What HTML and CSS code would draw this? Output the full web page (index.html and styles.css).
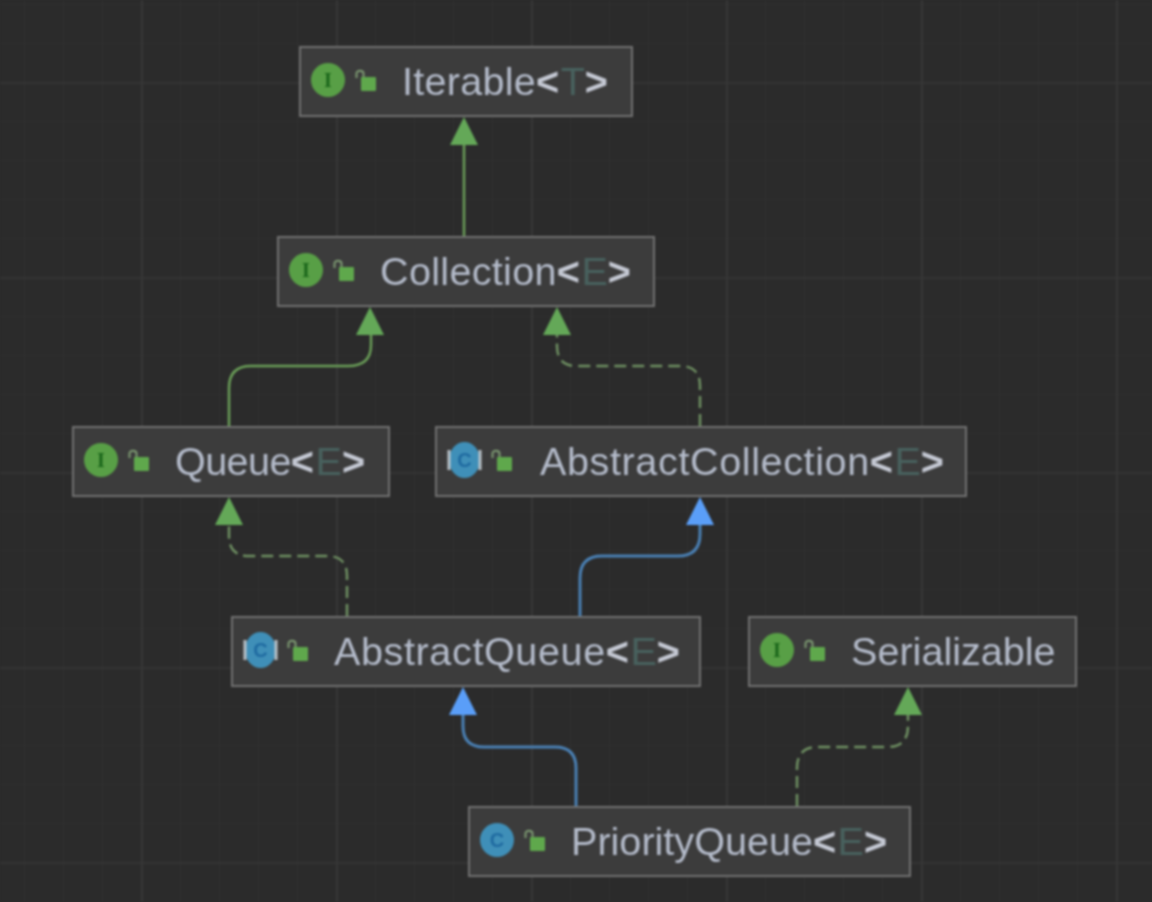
FILE: index.html
```html
<!DOCTYPE html>
<html lang="en">
<head>
<meta charset="utf-8">
<title>PriorityQueue diagram</title>
<link rel="stylesheet" href="styles.css">
</head>
<body>
<svg class="defs" width="0" height="0" aria-hidden="true">
  <defs>
    <symbol id="lock" viewBox="0 0 22 24">
      <path class="shackle" d="M1.500 9V4.500C1.500 2.800 3 1.800 5 1.800S8.500 2.800 8.500 4.500V8"/>
      <rect class="lock-body" x="6" y="8" width="15" height="14" rx="1"/>
    </symbol>
  </defs>
</svg>
<main class="canvas">
  <svg class="edges" width="1152" height="902" viewBox="0 0 1152 902" aria-hidden="true">
    <path class="edge green" d="M464 145V236"/>
    <path class="tip green-fill" d="M464 117L478 145H450Z"/>
    <path class="edge green" d="M229 426V388Q229 366 251 366H348Q371 366 371 345V335"/>
    <path class="tip green-fill" d="M370 307L384 335H356Z"/>
    <path class="edge green dashed" d="M700 426V386Q700 366 680 366H577Q557 366 557 346V335"/>
    <path class="tip green-fill" d="M557 307L571 335H543Z"/>
    <path class="edge green dashed" d="M347 616V576Q347 556 327 556H249Q229 556 229 536V525"/>
    <path class="tip green-fill" d="M229 497L243 525H215Z"/>
    <path class="edge blue" d="M580 616V578Q580 556 602 556H678Q700 556 700 534V525"/>
    <path class="tip blue-fill" d="M700 497L714 525H686Z"/>
    <path class="edge blue" d="M576 806V768Q576 747 555 747H484Q463 747 463 726V715"/>
    <path class="tip blue-fill" d="M463 687L477 715H449Z"/>
    <path class="edge green dashed" d="M797 806V768Q797 747 818 747H887Q908 747 908 726V715"/>
    <path class="tip green-fill" d="M908 687L922 715H894Z"/>
  </svg>

  <div class="node node-iterable">
    <svg class="badge" viewBox="0 0 44 36"><circle class="badge-i" cx="22" cy="18" r="17"/><text class="badge-letter letter-i" x="22" y="25">I</text></svg>
    <svg class="lock"><use href="#lock"/></svg>
    <span class="name">Iterable<b>&lt;</b><i>T</i><b>&gt;</b></span>
  </div>
  <div class="node node-collection">
    <svg class="badge" viewBox="0 0 44 36"><circle class="badge-i" cx="22" cy="18" r="17"/><text class="badge-letter letter-i" x="22" y="25">I</text></svg>
    <svg class="lock"><use href="#lock"/></svg>
    <span class="name">Collection<b>&lt;</b><i>E</i><b>&gt;</b></span>
  </div>
  <div class="node node-queue">
    <svg class="badge" viewBox="0 0 44 36"><circle class="badge-i" cx="22" cy="18" r="17"/><text class="badge-letter letter-i" x="22" y="25">I</text></svg>
    <svg class="lock"><use href="#lock"/></svg>
    <span class="name">Queue<b>&lt;</b><i>E</i><b>&gt;</b></span>
  </div>
  <div class="node node-abstract-collection">
    <svg class="badge" viewBox="0 0 44 36"><ellipse class="badge-c" cx="22.500" cy="18" rx="15.500" ry="18"/><path class="badge-bars" d="M7 8V28M38 8V28"/><text class="badge-letter letter-c" x="22.500" y="25">C</text></svg>
    <svg class="lock"><use href="#lock"/></svg>
    <span class="name">AbstractCollection<b>&lt;</b><i>E</i><b>&gt;</b></span>
  </div>
  <div class="node node-abstract-queue">
    <svg class="badge" viewBox="0 0 44 36"><ellipse class="badge-c" cx="22.500" cy="18" rx="15.500" ry="18"/><path class="badge-bars" d="M7 8V28M38 8V28"/><text class="badge-letter letter-c" x="22.500" y="25">C</text></svg>
    <svg class="lock"><use href="#lock"/></svg>
    <span class="name">AbstractQueue<b>&lt;</b><i>E</i><b>&gt;</b></span>
  </div>
  <div class="node node-serializable">
    <svg class="badge" viewBox="0 0 44 36"><circle class="badge-i" cx="22" cy="18" r="17"/><text class="badge-letter letter-i" x="22" y="25">I</text></svg>
    <svg class="lock"><use href="#lock"/></svg>
    <span class="name">Serializable</span>
  </div>
  <div class="node node-priority">
    <svg class="badge" viewBox="0 0 44 36"><circle class="badge-c" cx="22" cy="18" r="17"/><text class="badge-letter letter-c" x="22" y="25">C</text></svg>
    <svg class="lock"><use href="#lock"/></svg>
    <span class="name">PriorityQueue<b>&lt;</b><i>E</i><b>&gt;</b></span>
  </div>
</main>
</body>
</html>
```
FILE: styles.css
```css
html, body {
  margin: 0;
  height: 100%;
  overflow: hidden;
  background: #2b2b2b;
}

.defs {
  position: absolute;
}

.canvas {
  position: relative;
  width: 1152px;
  height: 902px;
  overflow: hidden;
  filter: blur(1.2px);
  background-color: #2b2b2b;
  background-image:
    linear-gradient(to right, #373737 2px, transparent 2px),
    linear-gradient(to bottom, #343434 2px, transparent 2px),
    linear-gradient(to right, #303030 1px, transparent 1px),
    linear-gradient(to bottom, #2f2f2f 1px, transparent 1px);
  background-size: 195px 195px, 195px 195px, 39px 39px, 39px 39px;
  background-position: 141px 0, 0 82px, 24px 0, 0 4px;
}

.edges {
  position: absolute;
  inset: 0;
}

.edge {
  fill: none;
  stroke-width: 2.500;
}

.green { stroke: #6a9e58; }
.blue { stroke: #4a80b4; stroke-width: 3; }
.dashed { stroke: #6e8f62; stroke-dasharray: 12 6; }
.tip { stroke: none; }
.green-fill { fill: #64a858; }
.blue-fill { fill: #5a9ef8; }

.node {
  position: absolute;
  box-sizing: border-box;
  height: 71px;
  display: flex;
  align-items: center;
  background: #3c3c3c;
  border: 2px solid #707070;
  color: #b4bbca;
  font-family: "Liberation Sans", Arial, sans-serif;
  font-size: 39.6px;
  white-space: nowrap;
}

.node-iterable { left: 299px; top: 46px; width: 334px; letter-spacing: 0.25px; }
.node-collection { left: 277px; top: 236px; width: 378px; letter-spacing: 0.3px; }
.node-queue { left: 72px; top: 426px; width: 318px; letter-spacing: -0.6px; }
.node-abstract-collection { left: 435px; top: 426px; width: 532px; letter-spacing: 0.6px; }
.node-abstract-queue { left: 231px; top: 616px; width: 470px; letter-spacing: 0.6px; }
.node-serializable { left: 748px; top: 616px; width: 329px; }
.node-priority { left: 468px; top: 806px; width: 443px; }

.node-abstract-collection .name { margin-left: 2px; }

.badge {
  width: 44px;
  height: 36px;
  flex: none;
  margin-left: 5px;
  margin-top: -4px;
}

.lock {
  width: 22px;
  height: 24px;
  flex: none;
  margin-left: 5px;
  margin-right: 25px;
  margin-top: -1px;
}

.shackle {
  fill: none;
  stroke: #7d9a72;
  stroke-width: 2;
}

.lock-body { fill: #5fa84c; }

.badge-i { fill: #589f46; }
.badge-c { fill: #3f8fb8; }
.badge-bars {
  fill: none;
  stroke: #b9c2c8;
  stroke-width: 3;
}

.badge-letter {
  font-family: "Liberation Serif", serif;
  font-size: 20px;
  font-weight: 700;
  letter-spacing: 0;
  text-anchor: middle;
}

.letter-i { fill: #1a661a; }
.letter-c { fill: #1f6aa0; font-family: "Liberation Sans", sans-serif; }

.name b {
  font-weight: 700;
  letter-spacing: 1.5px;
  color: #c5c9d4;
}

.name i {
  font-style: normal;
  letter-spacing: 0;
  color: #48615e;
}
```
